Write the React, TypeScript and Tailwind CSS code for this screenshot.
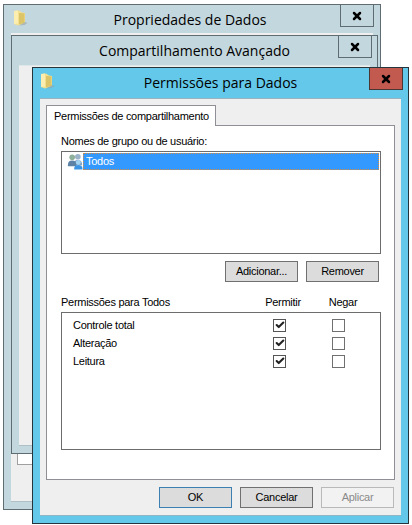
import { Check, X } from 'lucide-react';

const uiFont = "font-['Liberation_Sans',Arial,sans-serif]";
const titleFont = "font-['Open_Sans','Noto_Sans',sans-serif]";

function FolderIcon() {
  return (
    <svg width="16" height="16" viewBox="0 0 16 16">
      <path d="M1 1 L6 0.5 L9 2.5 L12 3 L12 13 L5 15.5 L1 14 Z" fill="#f3e08e" />
      <path d="M1 1 L5 0.5 L5 13.5 L1 14 Z" fill="#fbeeb0" />
      <path d="M6 3 L11.5 3.2 L11.5 12.8 L6 14.5 Z" fill="#dcc468" />
      <path d="M12 12 L14.5 13 L11.5 15 L6 15.5 Z" fill="#9aa3a5" opacity="0.6" />
    </svg>
  );
}

function UsersIcon() {
  return (
    <svg width="17" height="17" viewBox="0 0 18 18">
      <circle cx="11.5" cy="4" r="3" fill="#9bb3c9" />
      <path d="M7 13 C7 9 8.5 7.5 11.5 7.5 C14.5 7.5 16 9 16 13 Z" fill="#7f9fbe" />
      <circle cx="5.5" cy="4.5" r="3" fill="#8fb09a" />
      <path d="M1 13 C1 9.5 2.5 8 5.5 8 C8.5 8 10 9.5 10 13 L10 14 L1 14 Z" fill="#5d82a6" />
      <circle cx="12" cy="10" r="2.6" fill="#a3d3f2" />
      <path d="M7.5 17.5 C7.5 14 9 12.8 12 12.8 C15 12.8 16.5 14 16.5 17.5 Z" fill="#3b95e4" />
    </svg>
  );
}

function CloseButton({ className }: { className: string }) {
  return (
    <div className={`absolute flex h-[22px] w-[34px] items-center justify-center border border-t-0 ${className}`}>
      <X size={12} strokeWidth={5} className="text-black" />
    </div>
  );
}

function Button({ label, tone = 'normal' }: { label: string; tone?: 'normal' | 'default' | 'disabled' }) {
  const tones = {
    normal: 'border-[#707070] bg-[#dcdcdc] text-black',
    default: 'border-[#3c7fb1] bg-[#dcdcdc] text-black',
    disabled: 'border-[#b9b9b9] bg-[#f2f2f2] text-[#8a8a8a]',
  };
  return (
    <div className={`flex h-[21px] w-[73px] items-center justify-center border ${tones[tone]}`}>{label}</div>
  );
}

function PermBox({ checked }: { checked: boolean }) {
  return (
    <div className={`flex h-[13px] w-[13px] items-center justify-center border bg-white ${checked ? 'border-[#555]' : 'border-[#707070]'}`}>
      {checked && <Check size={10} strokeWidth={5} className="text-[#222]" />}
    </div>
  );
}

const permissions = ['Controle total', 'Alteração', 'Leitura'];

export default function App() {
  return (
    <div className={`relative h-[525px] w-[412px] overflow-hidden bg-white text-[11px] tracking-[-0.28px] ${uiFont}`}>
      {/* Propriedades de Dados */}
      <div className="absolute left-[3px] top-[4px] h-[506px] w-[378px] border border-[#5f6c72] bg-[#c3d7de]">
        <div className={`mt-[3px] h-[24px] pr-[4px] text-center text-[14px] leading-[24px] tracking-normal text-black ${titleFont}`}>
          Propriedades de Dados
        </div>
        <div className="absolute left-[9px] top-[5px]"><FolderIcon /></div>
        <CloseButton className="left-[336px] top-0 border-[#5f6c72]" />
        <div className="absolute bottom-[7px] left-[7px] right-[7px] top-[28px] border-b border-[#aebfc5] bg-[#efefef]">
          <div className="absolute bottom-[36px] left-[6px] h-[30px] w-[30px] border border-[#a0a0a0] bg-white" />
        </div>
      </div>

      {/* Compartilhamento Avançado */}
      <div className="absolute left-[11px] top-[35px] h-[419px] w-[367px] border border-[#5f6c72] bg-[#c3d7de]">
        <div className={`mt-[3px] h-[24px] text-center text-[14px] leading-[24px] tracking-normal text-black ${titleFont}`}>
          Compartilhamento Avançado
        </div>
        <CloseButton className="left-[326px] top-0 border-[#5f6c72]" />
        <div className="absolute bottom-[7px] left-[7px] right-[7px] top-[29px] border-y border-y-[#dfe6e8] border-b-[#aebfc5] bg-[#efefef]" />
      </div>

      {/* Permissões para Dados */}
      <div className="absolute left-[32px] top-[67px] flex h-[457px] w-[377px] flex-col border border-[#26343b] bg-[#63c8ea] px-[7px] pb-[7px]">
        <div className={`h-[30px] text-center text-[14px] leading-[30px] tracking-normal text-black ${titleFont}`}>
          Permissões para Dados
        </div>
        <div className="absolute left-[7px] top-[5px]"><FolderIcon /></div>
        <CloseButton className="left-[336px] top-0 border-[#4a3533] bg-[#c25a50]" />

        <div className="flex min-h-0 flex-1 flex-col border-y border-t-[#9ab4bf] border-b-[#8fb4c4] bg-[#efefef] px-[6px] pt-[6px]">
          <div className="relative z-10 -mb-px flex h-[21px] w-[170px] shrink-0 items-center border border-b-0 border-[#8f8f95] bg-white pl-[7px] text-black">
            Permissões de compartilhamento
          </div>
          <div className="flex h-[355px] w-[349px] shrink-0 flex-col border border-[#8f8f95] bg-white pl-[14px] pr-[13px]">
            <div className="mt-[8px] h-[14px] leading-[14px] text-black">Nomes de grupo ou de usuário:</div>
            <div className="mt-[3px] h-[103px] border border-[#6d6d6d] px-px pt-px">
              <div className="flex items-center">
                <div className="ml-[4px] w-[16px] shrink-0"><UsersIcon /></div>
                <div className="h-[17px] flex-1 border border-dotted border-[#d98a3c] bg-[#3399ff] pl-[2px] leading-[15px] text-white">Todos</div>
              </div>
            </div>
            <div className="mt-[7px] flex justify-end gap-[8px] pr-[2px]">
              <Button label="Adicionar..." />
              <Button label="Remover" />
            </div>
            <div className="mt-[12px] flex h-[16px] items-center text-black">
              <div className="w-[192px]">Permissões para Todos</div>
              <div className="w-[60px] text-center">Permitir</div>
              <div className="w-[60px] text-center">Negar</div>
            </div>
            <div className="mt-[2px] h-[138px] border border-[#6d6d6d] pt-[3px]">
              {permissions.map((name) => (
                <div key={name} className="flex h-[18px] items-center text-black">
                  <div className="w-[211px] pl-[11px]">{name}</div>
                  <PermBox checked />
                  <div className="w-[46px]" />
                  <PermBox checked={false} />
                </div>
              ))}
            </div>
          </div>
          <div className="mt-[7px] flex justify-end gap-[8px] pr-[1px]">
            <Button label="OK" tone="default" />
            <Button label="Cancelar" />
            <Button label="Aplicar" tone="disabled" />
          </div>
        </div>
      </div>
    </div>
  );
}
